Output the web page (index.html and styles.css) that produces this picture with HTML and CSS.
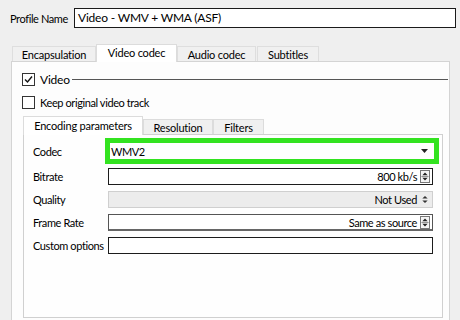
FILE: index.html
```html
<!DOCTYPE html>
<html>
<head>
<meta charset="utf-8">
<link rel="stylesheet" href="styles.css">
</head>
<body>
<div class="profile">
  <span class="plabel">Profile Name</span>
  <div class="pinput">Video - WMV + WMA (ASF)</div>
</div>
<div class="tabs">
  <div class="tab t-encap">Encapsulation</div>
  <div class="tab sel t-video">Video codec</div>
  <div class="tab t-audio">Audio codec</div>
  <div class="tab t-subs">Subtitles</div>
</div>
<div class="panel">
  <div class="group-head">
    <span class="cb checked"><svg width="11" height="11" viewBox="0 0 11 11"><path d="M2 5.5 L4.5 8 L9 2.5" fill="none" stroke="#111" stroke-width="1.4"/></svg></span>
    <span class="glabel">Video</span>
    <span class="gline"></span>
  </div>
  <div class="keep">
    <span class="cb"></span>
    <span>Keep original video track</span>
  </div>
  <div class="itabs">
    <div class="itab sel i-enc">Encoding parameters</div>
    <div class="itab i-res">Resolution</div>
    <div class="itab i-fil">Filters</div>
  </div>
  <div class="ipanel">
    <div class="row codec-row">
      <span class="lbl">Codec</span>
      <div class="green">
        <div class="combo"><span>WMV2</span><svg class="arrow" width="7" height="4" viewBox="0 0 7 4"><path d="M0 0 H7 L3.5 4 Z" fill="#222"/></svg></div>
      </div>
    </div>
    <div class="row">
      <span class="lbl">Bitrate</span>
      <div class="field spin"><span class="val">800 kb/s</span><span class="spinbtn"><svg width="9" height="13" viewBox="0 0 9 13"><path d="M1.5 5 L4.5 2 L7.5 5 Z M1.5 8 L4.5 11 L7.5 8 Z" fill="#222"/><path d="M0.5 6.5 H8.5" stroke="#888" stroke-width="1"/></svg></span></div>
    </div>
    <div class="row">
      <span class="lbl">Quality</span>
      <div class="field disabled"><span class="val">Not Used</span><span class="spinbtn plain"><svg width="9" height="13" viewBox="0 0 9 13"><path d="M1.5 5.5 L4.5 2.5 L7.5 5.5 Z M1.5 7.5 L4.5 10.5 L7.5 7.5 Z" fill="#333"/></svg></span></div>
    </div>
    <div class="row">
      <span class="lbl">Frame Rate</span>
      <div class="field spin fr"><span class="val">Same as source</span><span class="spinbtn"><svg width="9" height="13" viewBox="0 0 9 13"><path d="M1.5 5 L4.5 2 L7.5 5 Z M1.5 8 L4.5 11 L7.5 8 Z" fill="#222"/><path d="M0.5 6.5 H8.5" stroke="#888" stroke-width="1"/></svg></span></div>
    </div>
    <div class="row">
      <span class="lbl">Custom options</span>
      <div class="field"></div>
    </div>
  </div>
</div>
</body>
</html>
```
FILE: styles.css
```css
html, body {
  margin: 0;
  padding: 0;
  background: #efefef;
  font-family: Lato, "Noto Sans", sans-serif;
  font-size: 11px;
  letter-spacing: -0.4px;
  color: #000;
  overflow: hidden;
  height: 320px;
  white-space: nowrap;
}
.profile {
  display: flex;
  align-items: center;
  padding: 8px 4px 0 10px;
  height: 20px;
}
.plabel {
  width: 64px;
}
.pinput {
  flex: 1;
  height: 18px;
  border: 1px solid #1a1a1a;
  background: #fff;
  padding-left: 3px;
  line-height: 17px;
  font-size: 12px;
  letter-spacing: -0.2px;
}
.tabs {
  display: flex;
  align-items: flex-end;
  margin-top: 15px;
  padding-left: 12px;
  height: 18px;
}
.tab {
  height: 14px;
  line-height: 15px;
  text-align: center;
  background: #f0f0f0;
  border: 1px solid #dedede;
  border-bottom: none;
  box-sizing: content-box;
  letter-spacing: -0.2px;
}
.tab.sel {
  height: 17px;
  background: #fff;
  border-color: #dcdcdc;
  line-height: 16px;
  margin-bottom: -1px;
  position: relative;
  z-index: 1;
}
.t-encap { width: 82px; }
.t-video { width: 79px; }
.t-audio { width: 77px; }
.t-subs { width: 60px; margin-left: 1px; }
.panel {
  margin-left: 11px;
  width: 439px;
  height: 270px;
  background: #fdfdfd;
  border: 1px solid #d4d4d4;
  border-bottom: none;
  padding-left: 10px;
  box-sizing: border-box;
}
.group-head {
  display: flex;
  align-items: center;
  margin-top: 11px;
  height: 13px;
}
.cb {
  width: 11px;
  height: 11px;
  border: 1px solid #333;
  background: #fff;
  display: inline-flex;
  align-items: center;
  justify-content: center;
  flex: none;
}
.glabel {
  margin-left: 5px;
  font-size: 12px;
  letter-spacing: -0.2px;
}
.gline {
  flex: none;
  width: 376px;
  margin-left: 2px;
  height: 1px;
  background: #555;
}
.keep {
  display: flex;
  align-items: center;
  gap: 5px;
  margin-top: 10px;
  height: 13px;
}
.itabs {
  display: flex;
  align-items: flex-end;
  margin-top: 6px;
  margin-left: 1px;
  height: 19px;
}
.itab {
  height: 14px;
  line-height: 15px;
  text-align: center;
  background: #f0f0f0;
  border: 1px solid #dcdcdc;
  border-bottom: none;
  letter-spacing: -0.2px;
}
.itab.sel {
  height: 18px;
  line-height: 18px;
  background: #fff;
  margin-bottom: -1px;
  position: relative;
  z-index: 1;
}
.i-enc { width: 118px; }
.i-res { width: 68px; }
.i-fil { width: 49px; }
.ipanel {
  margin-left: 1px;
  width: 420px;
  height: 184px;
  background: #fefefe;
  border: 1px solid #d0d0d0;
  box-sizing: border-box;
  padding-top: 3px;
}
.row {
  display: flex;
  align-items: center;
  height: 17px;
  margin-bottom: 6px;
}
.lbl {
  width: 84px;
  padding-left: 9px;
  box-sizing: border-box;
  flex: none;
}
.codec-row {
  height: 26px;
  margin-bottom: 4px;
}
.green {
  margin-left: -3px;
  width: 334px;
  height: 26px;
  box-sizing: border-box;
  border: 5px solid #33e320;
  background: #fff;
  padding: 0;
}
.combo {
  height: 16px;
  box-sizing: border-box;
  display: flex;
  align-items: center;
  justify-content: space-between;
  padding: 0 6px 0 1px;
}
.arrow {
  display: block;
}
.field {
  width: 325px;
  height: 17px;
  box-sizing: border-box;
  border: 1px solid #1c1c1c;
  background: #fff;
  display: flex;
  align-items: center;
  justify-content: flex-end;
  padding-right: 1px;
}
.field.fr {
  border-color: #555;
  border-bottom: 2px solid #666;
}
.field.disabled {
  background: #ececec;
  border-color: #cfcfcf;
}
.val {
  margin-right: 3px;
}
.spinbtn {
  width: 10px;
  height: 13px;
  border: 1px solid #777;
  box-sizing: border-box;
  display: flex;
  align-items: center;
  justify-content: center;
  background: #f4f4f4;
  margin-right: 1px;
}
.spinbtn.plain {
  border-color: transparent;
  background: transparent;
}
```
